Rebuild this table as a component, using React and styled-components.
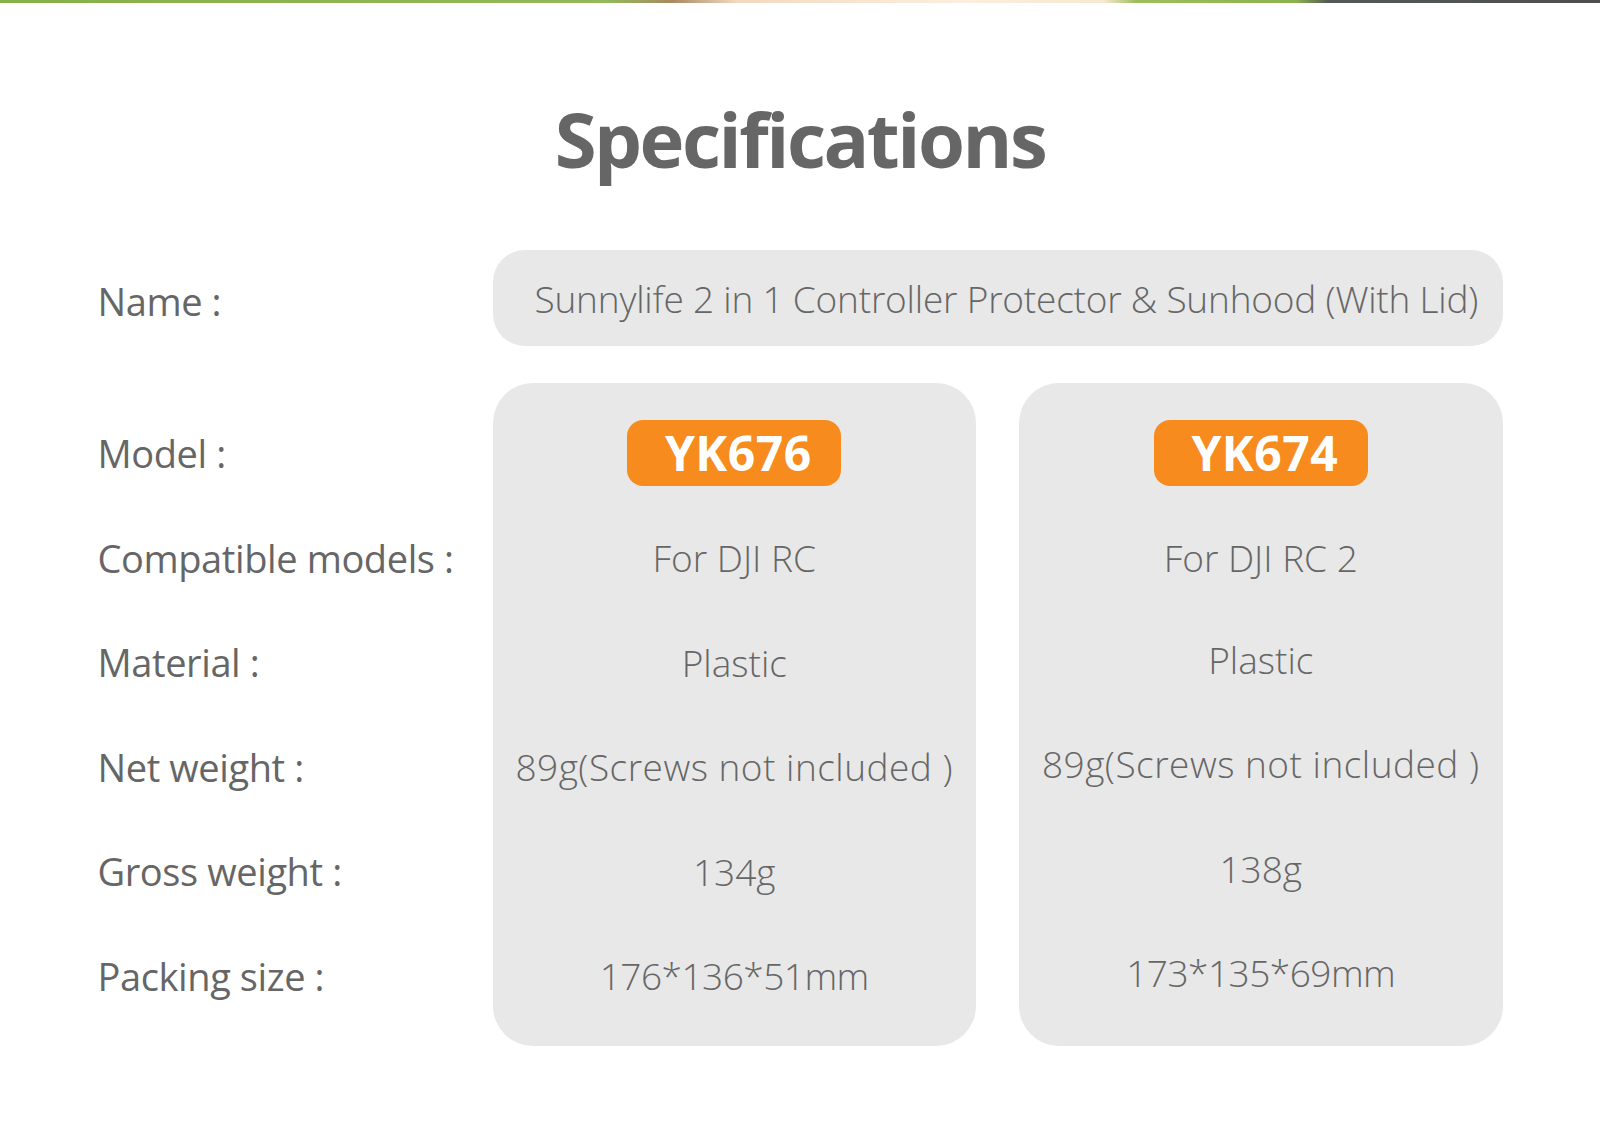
import React from 'react';
import styled, { createGlobalStyle } from 'styled-components';

const GlobalStyle = createGlobalStyle`
  html, body {
    margin: 0;
    padding: 0;
    background: #ffffff;
  }
  body {
    font-family: "Open Sans", "Noto Sans", sans-serif;
    color: #666666;
  }
`;

const ROW_H = 104.6;

const Page = styled.div`
  width: 1600px;
  height: 1121px;
  background: #ffffff;
  overflow: hidden;
`;

const TopStrip = styled.div`
  height: 3px;
  background: linear-gradient(
    90deg,
    #86b04a 0%,
    #93b85a 38%,
    #a88a62 42%,
    #f2d9bf 46%,
    #fbeede 60%,
    #f7e8d0 69%,
    #9dbe5c 71%,
    #8ab34f 81%,
    #555a56 83%,
    #4d4f4f 100%
  );
`;

const Title = styled.h1`
  margin: 88px 0 0;
  text-align: center;
  font-family: "Open Sans", "Noto Sans", sans-serif;
  font-weight: 700;
  font-size: 76px;
  line-height: 96px;
  letter-spacing: -2.5px;
  color: #666666;
`;

const Spec = styled.div`
  width: 1405px;
  margin: 63px auto 0;
`;

const NameRow = styled.div`
  display: flex;
  align-items: center;
  height: 96px;
`;

const Label = styled.div`
  width: 395px;
  flex: none;
  font-size: 38px;
  font-weight: 400;
  letter-spacing: -0.4px;
  color: #666666;
  white-space: nowrap;
  transform: translateY(${(p) => p.$shift || 0}px);
`;

const NameBox = styled.div`
  flex: 1;
  height: 96px;
  border-radius: 32px;
  background: #e8e8e8;
  display: flex;
  align-items: center;
  padding-left: 42px;
  font-weight: 300;
  font-size: 37px;
  letter-spacing: -0.2px;
  color: #666666;
  white-space: nowrap;
`;

const Body = styled.div`
  display: flex;
  margin-top: 37px;
`;

const LabelCol = styled.div`
  width: 395px;
  flex: none;
  padding: 17.7px 0;
`;

const Row = styled.div`
  height: ${ROW_H}px;
  display: flex;
  align-items: center;
  justify-content: ${(p) => (p.$center ? 'center' : 'flex-start')};
`;

const Cards = styled.div`
  flex: 1;
  display: flex;
  gap: 43px;
`;

const Card = styled.div`
  flex: 1;
  background: #e8e8e8;
  border-radius: 40px;
  padding: 17.7px 0;
`;

const Badge = styled.div`
  width: 214px;
  height: 66px;
  border-radius: 16px;
  background: #f78b1e;
  color: #ffffff;
  display: flex;
  align-items: center;
  justify-content: center;
  padding-left: 8px;
  box-sizing: border-box;
  font-weight: 700;
  font-size: 48px;
  letter-spacing: 0.5px;
`;

const Value = styled.div`
  font-weight: 300;
  font-size: 37px;
  letter-spacing: ${(p) => p.$spacing || 0}px;
  color: #666666;
  white-space: nowrap;
  transform: translateY(${(p) => p.$shift || 0}px);
`;

const labels = [
  'Model :',
  'Compatible models :',
  'Material :',
  'Net weight :',
  'Gross weight :',
  'Packing size :',
];

// letter spacing per value row, tuned to the widths in the picture
const spacing = [0, 0, 0.5, 0, -0.5];

const products = [
  {
    model: 'YK676',
    values: ['For DJI RC', 'Plastic', '89g(Screws not included )', '134g', '176*136*51mm'],
    shift: 0,
  },
  {
    model: 'YK674',
    values: ['For DJI RC 2', 'Plastic', '89g(Screws not included )', '138g', '173*135*69mm'],
    shift: -3,
  },
];

const App = () => {
  return (
    <Page>
      <GlobalStyle />
      <TopStrip />
      <Title>Specifications</Title>
      <Spec>
        <NameRow>
          <Label $shift={3}>Name :</Label>
          <NameBox>Sunnylife 2 in 1 Controller Protector &amp; Sunhood (With Lid)</NameBox>
        </NameRow>
        <Body>
          <LabelCol>
            {labels.map((l) => (
              <Row key={l}>
                <Label>{l}</Label>
              </Row>
            ))}
          </LabelCol>
          <Cards>
            {products.map((p) => (
              <Card key={p.model}>
                <Row $center>
                  <Badge>{p.model}</Badge>
                </Row>
                {p.values.map((v, i) => (
                  <Row $center key={i}>
                    <Value $spacing={spacing[i]} $shift={i > 0 ? p.shift : 0}>
                      {v}
                    </Value>
                  </Row>
                ))}
              </Card>
            ))}
          </Cards>
        </Body>
      </Spec>
    </Page>
  );
};

export default App;
